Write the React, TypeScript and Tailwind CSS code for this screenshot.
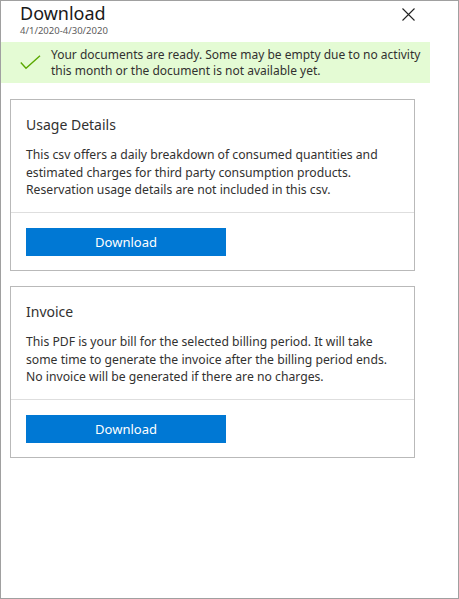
// Download panel – billing documents

const font = { fontFamily: '"Noto Sans", "Open Sans", sans-serif' };

interface DocCardProps {
    title: string;
    lines: string[];
}

function DocCard({ title, lines }: DocCardProps) {
    return (
        <div className="w-[405px] h-[172px] border border-[#b9b9b9] flex flex-col">
            <div className="h-[113px] px-[15px] pt-[15px] border-b border-[#dedede]">
                <div className="text-[14px] leading-[20px] text-[#323130]">{title}</div>
                <div className="mt-[11px] text-[12.2px] leading-[17.5px] text-[#323130]">
                    {lines.map((l) => (
                        <div key={l} className="whitespace-nowrap">{l}</div>
                    ))}
                </div>
            </div>
            <div className="px-[15px] pt-[15px]">
                <button className="w-[200px] h-[28px] bg-[#0078d4] text-white text-[13px] leading-[28px]">
                    Download
                </button>
            </div>
        </div>
    );
}

export default function App() {
    return (
        <div style={font} className="w-[459px] h-[599px] border border-[#a0a0a0] bg-white overflow-hidden">
            <div className="w-[429px]">
                {/* Header */}
                <div className="h-[41px] flex justify-between pl-[19px] pr-[8px]">
                    <div>
                        <h1 className="text-[18px] leading-[24px] text-[#1a1a1a]">Download</h1>
                        <div className="text-[9.5px] leading-[12px] text-[#5c5c5c]">4/1/2020-4/30/2020</div>
                    </div>
                    <button className="w-[28px] h-[26px] flex items-center justify-center" aria-label="Close">
                        <svg width="13" height="13" viewBox="0 0 13 13" fill="none" stroke="#222" strokeWidth="1.1">
                            <path d="M0.5 0.5 L12.5 12.5 M12.5 0.5 L0.5 12.5" />
                        </svg>
                    </button>
                </div>

                {/* Success banner */}
                <div className="h-[41px] bg-[#e4fbd4] flex items-center">
                    <svg className="ml-[19px] mr-[10px] shrink-0" width="21" height="15" viewBox="0 0 21 15" fill="none" stroke="#5aa800" strokeWidth="1.4">
                        <path d="M0.8 7.5 L6 13.2 L20 0.8" />
                    </svg>
                    <div className="text-[12px] leading-[16px] text-[#323130]">
                        <div className="whitespace-nowrap">Your documents are ready. Some may be empty due to no activity</div>
                        <div className="whitespace-nowrap">this month or the document is not available yet.</div>
                    </div>
                </div>

                {/* Documents */}
                <div className="pl-[9px] pt-[16px] flex flex-col gap-[15px]">
                    <DocCard
                        title="Usage Details"
                        lines={[
                            'This csv offers a daily breakdown of consumed quantities and',
                            'estimated charges for third party consumption products.',
                            'Reservation usage details are not included in this csv.',
                        ]}
                    />
                    <DocCard
                        title="Invoice"
                        lines={[
                            'This PDF is your bill for the selected billing period. It will take',
                            'some time to generate the invoice after the billing period ends.',
                            'No invoice will be generated if there are no charges.',
                        ]}
                    />
                </div>
            </div>
        </div>
    );
}
